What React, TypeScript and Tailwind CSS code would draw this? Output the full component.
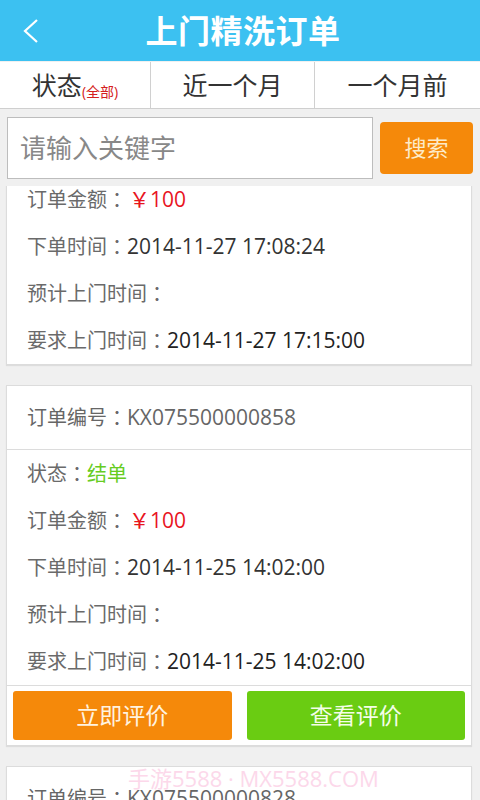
import { useState } from 'react';

type Order = {
  no: string;
  status: string;
  amount: string;
  orderTime: string;
  planTime: string;
  requireTime: string;
  actions?: boolean;
};

const orders: Order[] = [
  {
    no: 'KX075500000861',
    status: '结单',
    amount: '￥100',
    orderTime: '2014-11-27 17:08:24',
    planTime: '',
    requireTime: '2014-11-27 17:15:00',
  },
  {
    no: 'KX075500000858',
    status: '结单',
    amount: '￥100',
    orderTime: '2014-11-25 14:02:00',
    planTime: '',
    requireTime: '2014-11-25 14:02:00',
    actions: true,
  },
  {
    no: 'KX075500000828',
    status: '结单',
    amount: '￥100',
    orderTime: '2014-11-20 10:30:00',
    planTime: '',
    requireTime: '2014-11-20 11:00:00',
  },
];

const font = { fontFamily: '"Open Sans", "Noto Sans CJK SC", sans-serif' };
// centred full-width colon, as on the device
const colonFont = { fontFamily: '"Noto Sans CJK TC", sans-serif' };

function Colon() {
  return <span style={colonFont}>：</span>;
}

function Row({ label, children }: { label: string; children?: React.ReactNode }) {
  return (
    <div className="h-[47px] flex items-center px-[20px] text-[20px] text-[#6a6a6a] whitespace-nowrap">
      <span>{label}</span>
      <Colon />
      {children}
    </div>
  );
}

function OrderCard({ order }: { order: Order }) {
  return (
    <div className="ml-[6px] mr-[8px] bg-white border border-[#dcdcdc] shadow-[0_1px_1px_rgba(0,0,0,0.08)]">
      <div className="h-[64px] flex items-center px-[20px] text-[20px] text-[#666] border-b border-[#dcdcdc] whitespace-nowrap">
        <span>订单编号</span>
        <Colon />
        <span className="text-[21px]">{order.no}</span>
      </div>
      <Row label="状态">
        <span className="text-[#66cc22]">{order.status}</span>
      </Row>
      <Row label="订单金额">
        <span className="text-[#e8141e] text-[21px] ml-[2px]">{order.amount}</span>
      </Row>
      <Row label="下单时间">
        <span className="text-[#333] text-[21px]">{order.orderTime}</span>
      </Row>
      <Row label="预计上门时间">
        <span className="text-[#333]">{order.planTime}</span>
      </Row>
      <Row label="要求上门时间">
        <span className="text-[#222] text-[21px] font-medium">{order.requireTime}</span>
      </Row>
      {order.actions && (
        <div className="border-t border-[#dcdcdc] px-[6px] py-[5px] flex gap-[15px]">
          <button className="flex-1 h-[49px] rounded-[3px] bg-[#f5890a] text-[#fff3e0] text-[23px]">
            立即评价
          </button>
          <button className="flex-1 h-[49px] rounded-[3px] bg-[#6acc12] text-[#f4fde8] text-[23px]">
            查看评价
          </button>
        </div>
      )}
    </div>
  );
}

export default function App() {
  const [tab, setTab] = useState(0);
  const [keyword, setKeyword] = useState('');

  return (
    <div className="relative w-[480px] h-[800px] overflow-hidden bg-[#f0f0f0] flex flex-col" style={font}>
      {/* header */}
      <div className="h-[61px] shrink-0 bg-[#3cc1f1] flex items-center relative">
        <svg className="absolute left-[20px] top-[18px]" width="22" height="26" viewBox="0 0 22 26">
          <path d="M17 2 L5 13 L17 24" fill="none" stroke="white" strokeWidth="2.2" />
        </svg>
        <h1 className="flex-1 text-center text-white text-[32px] font-bold pl-[6px] tracking-[0.5px]">
          上门精洗订单
        </h1>
      </div>

      {/* tabs */}
      <div className="h-[47px] shrink-0 flex bg-white border-b border-[#cfcfcf] mt-[1px]">
        {['状态', '近一个月', '一个月前'].map((t, i) => (
          <button
            key={t}
            onClick={() => setTab(i)}
            className={
              'flex items-center justify-center text-[25px] leading-none text-[#333] whitespace-nowrap bg-white ' +
              (i === 0 ? 'w-[151px] border-r border-[#d0d0d0]' : i === 1 ? 'w-[164px] border-r border-[#d0d0d0]' : 'flex-1')
            }
            aria-pressed={tab === i}
          >
            <span>{t}</span>
            {i === 0 && <span className="text-[14px] text-[#d42020] mt-[14px]">(全部)</span>}
          </button>
        ))}
      </div>

      {/* search */}
      <div className="h-[77px] shrink-0 flex items-center px-[7px] gap-[7px]">
        <input
          value={keyword}
          onChange={e => setKeyword(e.target.value)}
          placeholder="请输入关键字"
          className="w-[366px] h-[62px] bg-white border border-[#bdbdbd] px-[12px] text-[26px] text-[#333] placeholder:text-[#888] outline-none"
        />
        <button className="w-[93px] h-[52px] rounded-[4px] bg-[#f5890a] text-[#fdebc8] text-[22px]">
          搜索
        </button>
      </div>

      {/* list */}
      <div className="flex-1 overflow-hidden">
        <div className="-mt-[122px] flex flex-col gap-[20px]">
          {orders.map(o => (
            <OrderCard key={o.no} order={o} />
          ))}
        </div>
      </div>

      <div className="absolute left-[128px] top-[762px] text-[22px] text-[#fcd8ea] pointer-events-none whitespace-nowrap">
        手游5588 · MX5588.COM
      </div>
    </div>
  );
}
